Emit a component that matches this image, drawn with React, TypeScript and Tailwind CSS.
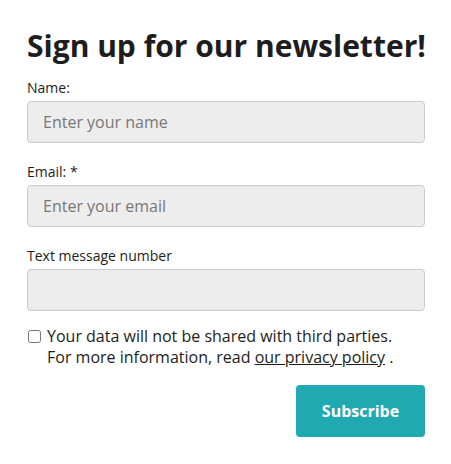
import React from "react";

export default function App() {
  return (
    <div className="w-[451px] h-[464px] bg-white pl-[27px] pr-[26px] pt-[24px] text-[#1d1d20]" style={{ fontFamily: '"Open Sans", sans-serif' }}>
      <h1 className="text-[30px] font-bold leading-[44px] tracking-[0px] m-0 whitespace-nowrap">Sign up for our newsletter!</h1>
      <form className="mt-[10px]">
        <label className="block text-[14px] leading-[20px]">Name:</label>
        <input
          className="mt-[3px] block w-full h-[42px] rounded-[4px] border border-[#cbcbcb] bg-[#ededed] px-[15px] text-[16px] placeholder:text-[#777]"
          placeholder="Enter your name"
        />
        <label className="block mt-[19px] text-[14px] leading-[20px]">Email: *</label>
        <input
          className="mt-[3px] block w-full h-[42px] rounded-[4px] border border-[#cbcbcb] bg-[#ededed] px-[15px] text-[16px] placeholder:text-[#777]"
          placeholder="Enter your email"
        />
        <label className="block mt-[19px] text-[14px] leading-[20px]">Text message number</label>
        <input className="mt-[3px] block w-full h-[42px] rounded-[4px] border border-[#cbcbcb] bg-[#ededed] px-[15px] text-[16px]" />
        <div className="mt-[15px] flex items-start gap-[6px] text-[16px] leading-[21px]">
          <input type="checkbox" className="mt-[4px] ml-[1px] w-[13px] h-[13px] shrink-0" />
          <div>
            <div>Your data will not be shared with third parties.</div>
            <div>
              For more information, read <a className="underline" href="#">our privacy policy</a> .
            </div>
          </div>
        </div>
        <div className="mt-[17px] flex justify-end">
          <button type="button" className="w-[129px] h-[52px] rounded-[4px] bg-[#20a9b0] text-white font-bold text-[16px]">
            Subscribe
          </button>
        </div>
      </form>
    </div>
  );
}
